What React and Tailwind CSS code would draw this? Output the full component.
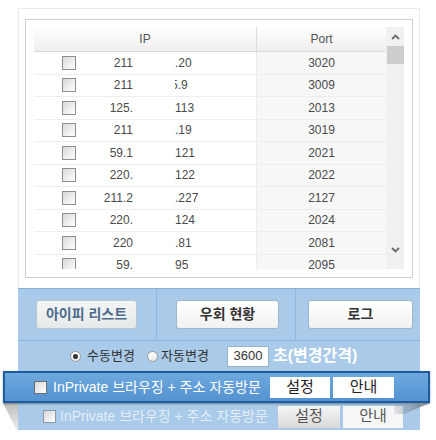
import React from 'react';

const rows = [
  ['211', '.20', '3020'],
  ['211', '5.9', '3009', true],
  ['125.', '113', '2013'],
  ['211', '.19', '3019'],
  ['59.1', '121', '2021'],
  ['220.', '122', '2022'],
  ['211.2', '.227', '2127'],
  ['220.', '124', '2024'],
  ['220', '.81', '2081'],
  ['59.', '95', '2095'],
];

const Box = ({ size = 'w-[14px] h-[14px]', tone = 'border-[#8e8e8e]' }) => (
  <span className={`block shrink-0 ${size} border ${tone} bg-gradient-to-br from-[#d9d9d9] to-[#ffffff]`} />
);

const Chevron = ({ down = false }) => (
  <svg width="9" height="6" viewBox="0 0 9 6" className="block">
    <path
      d={down ? 'M1 1 L4.5 4.5 L8 1' : 'M1 5 L4.5 1.5 L8 5'}
      fill="none"
      stroke="#6b6b6b"
      strokeWidth="1.8"
    />
  </svg>
);

export default function App() {
  return (
    <div className="w-[436px] h-[440px] bg-white pt-[8px] overflow-hidden font-['Liberation_Sans','Noto_Sans_CJK_KR',sans-serif]">
      {/* 목록 패널 */}
      <div className="ml-[18px] w-[402px] border-x border-t border-[#ebebeb] bg-white px-[6px] pt-[10px] pb-[10px]">
        <div className="w-[388px] h-[259px] border border-[#cfcfcf] pl-[8px] pr-[8px] pt-[7px]">
          <div className="flex h-[242px] overflow-hidden">
            <div className="w-[352px] text-[12px] text-[#4a4a4a]">
              <div className="flex h-[25px] border-b border-[#dadada] bg-gradient-to-b from-[#ffffff] to-[#eeeeee] text-[#555]">
                <div className="w-[223px] flex items-center justify-center border-r border-[#dcdcdc]">IP</div>
                <div className="flex-1 flex items-center justify-center">Port</div>
              </div>
              {rows.map(([left, right, port, clip], i) => (
                <div key={i} className="flex h-[22.5px] border-b border-[#ededed]">
                  <div className="w-[223px] flex items-center border-r border-[#ececec] bg-white">
                    <span className="ml-[28px]"><Box /></span>
                    <span className="w-[57px] overflow-hidden whitespace-nowrap text-right">{left}</span>
                    <span className="w-[42px] self-stretch bg-white" />
                    <span className="overflow-hidden whitespace-nowrap">
                      <span className={clip ? 'block -ml-[4px]' : 'block'}>{right}</span>
                    </span>
                  </div>
                  <div className="flex-1 flex items-center justify-center bg-[#f7f7f7]">{port}</div>
                </div>
              ))}
            </div>
            <div className="w-[18px] bg-[#f1f1f1] flex flex-col items-center">
              <div className="h-[19px] flex items-center justify-center"><Chevron /></div>
              <div className="w-[17px] h-[18px] bg-[#cdcdcd]" />
              <div className="flex-1" />
              <div className="h-[24px] flex items-start justify-center pt-[2px]"><Chevron down /></div>
            </div>
          </div>
        </div>
      </div>

      {/* 설정 패널 */}
      <div className="relative ml-[18px] w-[402px] bg-[#a9cae8] border-t border-[#88afd6]">
        <div className="flex h-[52px] border-b border-[#8fb4d9]">
          <div className="w-[138px] flex items-center pl-[18px]">
            <button className="w-[101px] h-[29px] rounded-[3px] border border-[#b9c6d2] bg-gradient-to-b from-[#f4f5f5] to-[#e6e9ea] text-[14px] font-bold text-[#4d6c8c]">
              아이피 리스트
            </button>
          </div>
          <div className="w-[139px] flex items-center pl-[19px] border-l border-[#91b6da]">
            <button className="w-[103px] h-[29px] rounded-[3px] border border-[#9fb6cc] bg-gradient-to-b from-[#ffffff] to-[#f1f1f1] text-[14px] font-bold text-[#333]">
              우회 현황
            </button>
          </div>
          <div className="flex-1 flex items-center pl-[12px] border-l border-[#91b6da]">
            <button className="w-[105px] h-[29px] rounded-[3px] border border-[#9fb6cc] bg-gradient-to-b from-[#ffffff] to-[#f1f1f1] text-[14px] font-bold text-[#333]">
              로그
            </button>
          </div>
        </div>

        <div className="flex h-[30px] items-center pl-[52px] text-[13px] text-[#333]">
          <span className="w-[11px] h-[11px] rounded-full border border-[#9a9a9a] bg-gradient-to-b from-[#ffffff] to-[#e8e8e8] flex items-center justify-center">
            <span className="w-[5px] h-[5px] rounded-full bg-[#333]" />
          </span>
          <span className="ml-[6px] w-[47px] whitespace-nowrap">수동변경</span>
          <span className="ml-[13px] w-[11px] h-[11px] rounded-full border border-[#9a9a9a] bg-gradient-to-b from-[#ffffff] to-[#e8e8e8]" />
          <span className="ml-[3px] w-[47px] whitespace-nowrap">자동변경</span>
          <span className="ml-[19px] w-[42px] h-[21px] border border-[#9ab3c9] bg-white flex items-center justify-center text-[13px] text-[#333]">
            3600
          </span>
          <span className="ml-[4px] text-[16px] font-bold text-white">초(변경간격)</span>
        </div>

        <div className="relative z-10 -ml-[15px] -mr-[10px] h-[32px] border-2 border-[#1f5c9f] bg-gradient-to-b from-[#6ea8de] to-[#5493d0] flex items-center pl-[29px] shadow-[0_1px_2px_rgba(0,0,0,0.35)]">
          <Box size="w-[13px] h-[13px]" tone="border-[#6d6d6d]" />
          <span className="ml-[6px] w-[217px] text-[14px] text-white whitespace-nowrap">InPrivate 브라우징 + 주소 자동방문</span>
          <span className="w-[60px] h-[21px] bg-white flex items-center justify-center text-[15px] text-[#222]">설정</span>
          <span className="ml-[3px] w-[61px] h-[21px] bg-white flex items-center justify-center text-[15px] text-[#222]">안내</span>
        </div>

        <div className="flex h-[27px] items-center pl-[25px]">
          <Box size="w-[13px] h-[13px]" tone="border-[#8d9aa6]" />
          <span className="ml-[4px] w-[218px] text-[14px] text-[#e4eef8] whitespace-nowrap">InPrivate 브라우징 + 주소 자동방문</span>
          <span className="w-[62px] h-[22px] bg-gradient-to-b from-[#f5f5f5] to-[#d9d9d9] flex items-center justify-center text-[15px] text-[#555]">설정</span>
          <span className="ml-[3px] w-[60px] h-[22px] bg-[#f6f6f6] flex items-center justify-center text-[15px] text-[#555]">안내</span>
        </div>

        {/* 접힌 그림자 */}
        <svg width="15" height="30" viewBox="0 0 15 30" className="absolute left-[-15px] bottom-[-3px]">
          <defs>
            <linearGradient id="ls" x1="0" y1="0" x2="0" y2="1">
              <stop offset="0" stopColor="#bdbdbd" />
              <stop offset="1" stopColor="#f4f4f4" />
            </linearGradient>
          </defs>
          <polygon points="0,0 15,0 15,30" fill="url(#ls)" />
        </svg>
        <svg width="36" height="12" viewBox="0 0 36 12" className="absolute right-[-10px] bottom-[15px] z-20">
          <defs>
            <linearGradient id="rs" x1="0" y1="0" x2="1" y2="0">
              <stop offset="0" stopColor="#8e9aa6" stopOpacity="0.2" />
              <stop offset="1" stopColor="#6f7b86" />
            </linearGradient>
          </defs>
          <polygon points="0,0 36,0 10,11 0,11" fill="url(#rs)" />
        </svg>
      </div>
    </div>
  );
}
